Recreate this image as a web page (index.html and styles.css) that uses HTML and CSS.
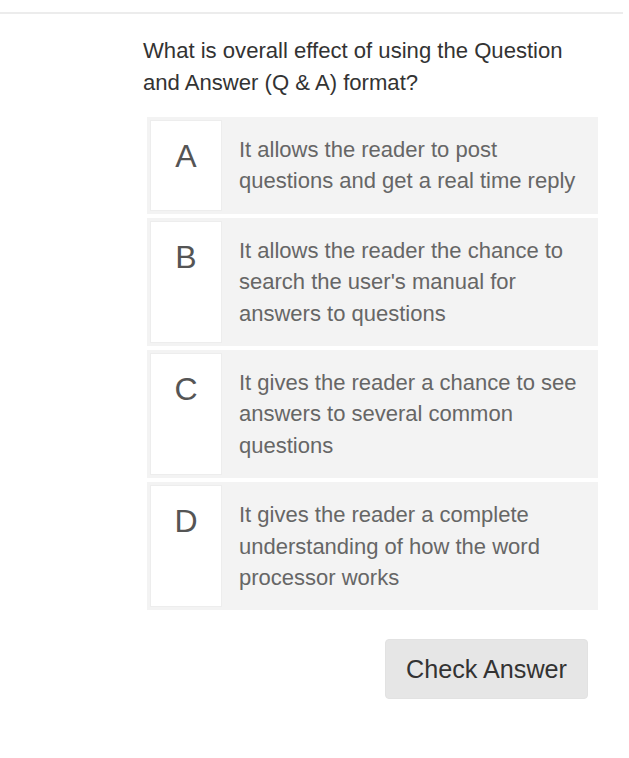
FILE: index.html
```html
<!DOCTYPE html>
<html>
<head>
<meta charset="utf-8">
<link rel="stylesheet" href="styles.css">
</head>
<body>
<div class="topbar"></div>
<div class="quiz">
  <p class="question">What is overall effect of using the Question and Answer (Q &amp; A) format?</p>
  <div class="options">
    <div class="option">
      <div class="letter">A</div>
      <div class="text">It allows the reader to post questions and get a real time reply</div>
    </div>
    <div class="option">
      <div class="letter">B</div>
      <div class="text">It allows the reader the chance to search the user's manual for answers to questions</div>
    </div>
    <div class="option">
      <div class="letter">C</div>
      <div class="text">It gives the reader a chance to see answers to several common questions</div>
    </div>
    <div class="option">
      <div class="letter">D</div>
      <div class="text">It gives the reader a complete understanding of how the word processor works</div>
    </div>
  </div>
  <div class="actions">
    <button class="check">Check Answer</button>
  </div>
</div>
</body>
</html>
```

FILE: styles.css
```css
html, body {
  margin: 0;
  padding: 0;
  background: #ffffff;
  font-family: "Liberation Sans", Arial, sans-serif;
}

.topbar {
  margin-top: 12px;
  width: 623px;
  height: 2px;
  background: #ececec;
}

.quiz {
  margin-left: 143px;
  width: 455px;
  padding-top: 21px;
}

.question {
  margin: 0 0 18px 0;
  font-size: 22.1px;
  line-height: 32px;
  color: #333333;
}

.options {
  margin-left: 4px;
  display: flex;
  flex-direction: column;
  gap: 4px;
}

.option {
  display: flex;
  background: #f3f3f3;
  padding: 3px 0 3px 3px;
}

.letter {
  flex: 0 0 auto;
  width: 72px;
  background: #ffffff;
  border: 1px solid #ededed;
  text-align: center;
  font-size: 32px;
  line-height: 32px;
  color: #555555;
  padding-top: 19px;
  box-sizing: border-box;
}

.text {
  flex: 1 1 auto;
  padding: 14px 17px 14px 17px;
  font-size: 22px;
  line-height: 31.4px;
  color: #666666;
}

.actions {
  display: flex;
  justify-content: flex-end;
  margin-top: 29px;
  padding-right: 10px;
}

.check {
  font-family: "Liberation Sans", Arial, sans-serif;
  font-size: 25.2px;
  line-height: 36px;
  color: #333333;
  background: #e6e6e6;
  border: 1px solid #e2e2e2;
  border-radius: 4px;
  padding: 11px 20px;
  cursor: pointer;
}
```
